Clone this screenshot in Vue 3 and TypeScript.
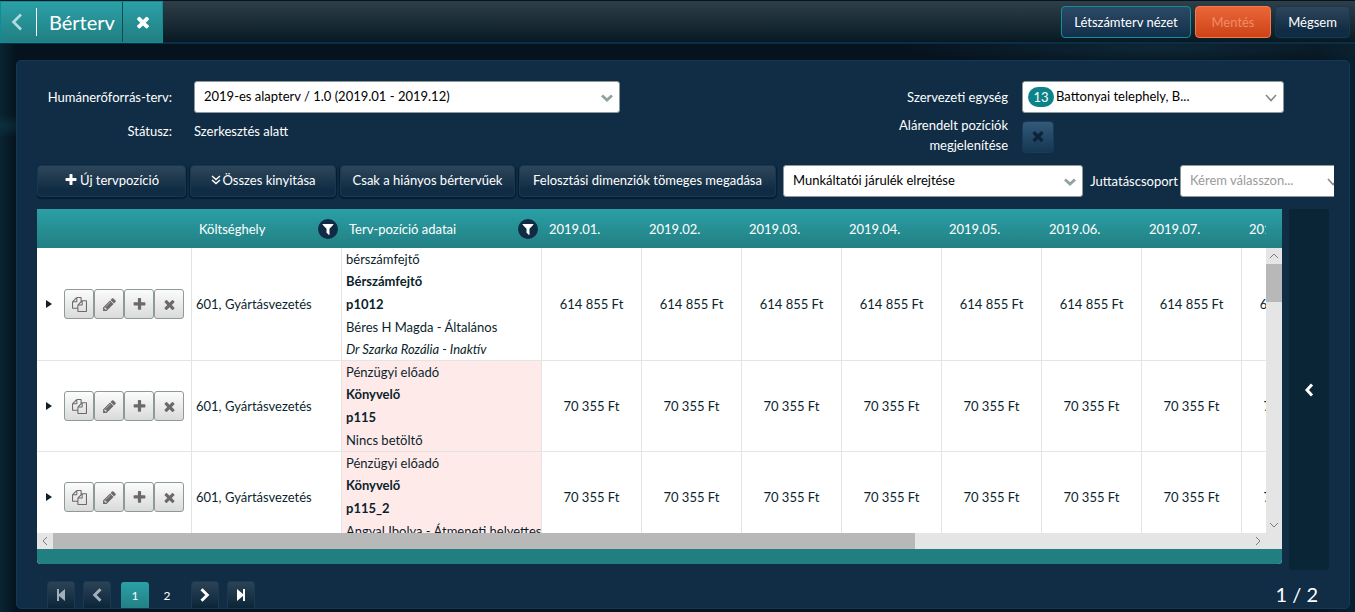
<script setup lang="ts">
import { ref } from 'vue'

interface PlanLine {
  text: string
  kind?: 'bold' | 'italic'
}

interface PlanRow {
  id: number
  costCenter: string
  lines: PlanLine[]
  missing: boolean
  amount: string
}

const months: string[] = Array.from({ length: 8 }, (_, i) => `2019.${String(i + 1).padStart(2, '0')}.`)

const rows: PlanRow[] = [
  {
    id: 1,
    costCenter: '601, Gyártásvezetés',
    lines: [
      { text: 'bérszámfejtő' },
      { text: 'Bérszámfejtő', kind: 'bold' },
      { text: 'p1012', kind: 'bold' },
      { text: 'Béres H Magda - Általános' },
      { text: 'Dr Szarka Rozália - Inaktív', kind: 'italic' },
    ],
    missing: false,
    amount: '614 855 Ft',
  },
  {
    id: 2,
    costCenter: '601, Gyártásvezetés',
    lines: [
      { text: 'Pénzügyi előadó' },
      { text: 'Könyvelő', kind: 'bold' },
      { text: 'p115', kind: 'bold' },
      { text: 'Nincs betöltő' },
    ],
    missing: true,
    amount: '70 355 Ft',
  },
  {
    id: 3,
    costCenter: '601, Gyártásvezetés',
    lines: [
      { text: 'Pénzügyi előadó' },
      { text: 'Könyvelő', kind: 'bold' },
      { text: 'p115_2', kind: 'bold' },
      { text: 'Angyal Ibolya - Átmeneti helyettes' },
    ],
    missing: true,
    amount: '70 355 Ft',
  },
]

const icons = {
  times:
    'M1490 1322q0 40-28 68l-136 136q-28 28-68 28t-68-28l-294-294-294 294q-28 28-68 28t-68-28l-136-136q-28-28-28-68t28-68l294-294-294-294q-28-28-28-68t28-68l136-136q28-28 68-28t68 28l294 294 294-294q28-28 68-28t68 28l136 136q28 28 28 68t-28 68l-294 294 294 294q28 28 28 68z',
  plus: 'M1600 736v192q0 40-28 68t-68 28h-416v416q0 40-28 68t-68 28h-192q-40 0-68-28t-28-68v-416h-416q-40 0-68-28t-28-68v-192q0-40 28-68t68-28h416v-416q0-40 28-68t68-28h192q40 0 68 28t28 68v416h416q40 0 68 28t28 68z',
  pencil:
    'M491 1536l91-91-235-235-91 91v107h128v128h107zm523-928q0-22-22-22-10 0-17 7l-542 542q-7 7-7 17 0 22 22 22 10 0 17-7l542-542q7-7 7-17zm-54-192l416 416-832 832h-416v-416zm683 96q0 53-37 90l-166 166-416-416 166-165q36-38 90-38 53 0 91 38l235 234q37 39 37 91z',
  copy: 'M1696 384q40 0 68 28t28 68v1216q0 40-28 68t-68 28h-960q-40 0-68-28t-28-68v-288h-544q-40 0-68-28t-28-68v-672q0-40 20-88t48-76l408-408q28-28 76-48t88-20h416q40 0 68 28t28 68v328q68-40 128-40h416zm-544 213l-299 299h299v-299zm-640-384l-299 299h299v-299zm196 647l316-316v-416h-384v416q0 40-28 68t-68 28h-416v640h512v-256q0-40 20-88t48-76zm956 804v-1152h-384v416q0 40-28 68t-68 28h-416v640h896z',
  filter:
    'M1595 295q17 41-14 70l-493 493v742q0 42-39 59-13 5-25 5-27 0-45-19l-256-256q-19-19-19-45v-486l-493-493q-31-29-14-70 17-39 59-39h1280q42 0 59 39z',
}

const actions = [
  { label: 'Másolás', path: icons.copy, cls: 'wide' },
  { label: 'Szerkesztés', path: icons.pencil, cls: '' },
  { label: 'Hozzáadás', path: icons.plus, cls: '' },
  { label: 'Törlés', path: icons.times, cls: '' },
]

const page = ref(1)
const showSubordinate = ref(false)
</script>

<template>
  <div class="app">
    <header class="topbar">
      <div class="tab">
        <button class="back" type="button" aria-label="Vissza">
          <svg width="12" height="18" viewBox="0 0 12 18"><path d="M10 1.500 2.500 9 10 16.500" fill="none" stroke="currentColor" stroke-width="2.600" /></svg>
        </button>
        <h1>Bérterv</h1>
        <button class="close" type="button" aria-label="Bezárás">
          <svg width="18" height="18" viewBox="0 0 1792 1792"><path :d="icons.times" fill="currentColor" /></svg>
        </button>
      </div>
      <div class="top-actions">
        <button class="btn outlined" type="button">Létszámterv nézet</button>
        <button class="btn save" type="button" disabled>Mentés</button>
        <button class="btn cancel" type="button">Mégsem</button>
      </div>
    </header>

    <main class="panel">
      <div class="form">
        <div class="form-grid main-fields">
          <label for="plan">Humánerőforrás-terv:</label>
          <div class="select">
            <select id="plan"><option>2019-es alapterv / 1.0 (2019.01 - 2019.12)</option></select>
            <svg class="caret bold" viewBox="0 0 12 8"><path d="M1 1.500 6 6 11 1.500" /></svg>
          </div>
          <span class="key">Státusz:</span>
          <span>Szerkesztés alatt</span>
        </div>
        <div class="form-grid unit-fields">
          <label for="unit">Szervezeti egység</label>
          <div class="select unit">
            <span class="badge">13</span>
            <select id="unit"><option>Battonyai telephely, B...</option></select>
            <svg class="caret" viewBox="0 0 12 8"><path d="M1 1 6 6.500 11 1" /></svg>
          </div>
          <label for="sub">Alárendelt pozíciók megjelenítése</label>
          <div class="toggle">
            <input id="sub" v-model="showSubordinate" type="checkbox" />
            <svg width="16" height="16" viewBox="0 0 1792 1792"><path :d="icons.times" fill="currentColor" /></svg>
          </div>
        </div>
      </div>

      <div class="toolbar">
        <button class="btn new" type="button">
          <svg width="14" height="14" viewBox="0 0 1792 1792"><path :d="icons.plus" fill="currentColor" /></svg>
          Új tervpozíció
        </button>
        <button class="btn expand" type="button">
          <svg width="10" height="10" viewBox="0 0 10 10"><path d="M1 1 5 4.500 9 1M1 5 5 8.500 9 5" fill="none" stroke="currentColor" stroke-width="1.500" /></svg>
          Összes kinyitása
        </button>
        <button class="btn missing" type="button">Csak a hiányos bértervűek</button>
        <button class="btn split" type="button">Felosztási dimenziók tömeges megadása</button>
        <div class="select contrib">
          <select aria-label="Munkáltatói járulék"><option>Munkáltatói járulék elrejtése</option></select>
          <svg class="caret bold" viewBox="0 0 12 8"><path d="M1 1.500 6 6 11 1.500" /></svg>
        </div>
        <label class="group-label" for="group">Juttatáscsoport</label>
        <div class="select group">
          <select id="group"><option>Kérem válasszon...</option></select>
          <svg class="caret" viewBox="0 0 12 8"><path d="M1 1 6 6.500 11 1" /></svg>
        </div>
      </div>

      <div class="content">
        <section class="grid">
          <div class="viewport">
            <table>
              <colgroup>
                <col class="c-actions" />
                <col class="c-cost" />
                <col class="c-plan" />
                <col v-for="m in months" :key="m" class="c-month" />
              </colgroup>
              <thead>
                <tr>
                  <th></th>
                  <th>
                    <div class="head">
                      Költséghely
                      <button class="filter" type="button" aria-label="Költséghely szűrése">
                        <svg width="14" height="14" viewBox="0 0 1792 1792"><path :d="icons.filter" fill="currentColor" /></svg>
                      </button>
                    </div>
                  </th>
                  <th>
                    <div class="head">
                      Terv-pozíció adatai
                      <button class="filter" type="button" aria-label="Terv-pozíció szűrése">
                        <svg width="14" height="14" viewBox="0 0 1792 1792"><path :d="icons.filter" fill="currentColor" /></svg>
                      </button>
                    </div>
                  </th>
                  <th v-for="m in months" :key="m">{{ m }}</th>
                </tr>
              </thead>
              <tbody>
                <tr v-for="row in rows" :key="row.id">
                  <td>
                    <div class="row-actions">
                      <button class="opener" type="button" aria-label="Kinyitás">
                        <svg width="6" height="8" viewBox="0 0 6 8"><path d="M0 0 6 4 0 8z" fill="currentColor" /></svg>
                      </button>
                      <button v-for="a in actions" :key="a.label" class="mini" type="button" :aria-label="a.label">
                        <svg :class="a.cls" viewBox="0 0 1792 1792"><path :d="a.path" fill="currentColor" /></svg>
                      </button>
                    </div>
                  </td>
                  <td class="cost">{{ row.costCenter }}</td>
                  <td class="plan" :class="{ pink: row.missing }">
                    <div v-for="line in row.lines" :key="line.text" class="line" :class="line.kind">{{ line.text }}</div>
                  </td>
                  <td v-for="m in months" :key="m" class="amount">{{ row.amount }}</td>
                </tr>
              </tbody>
            </table>
          </div>
          <div class="corner"></div>
          <div class="vscroll">
            <svg viewBox="0 0 16 16"><path d="M4 10 8 6 12 10" /></svg>
            <div class="vthumb"></div>
            <svg class="end" viewBox="0 0 16 16"><path d="M4 6 8 10 12 6" /></svg>
          </div>
          <div class="hscroll">
            <svg viewBox="0 0 16 16"><path d="M10 4 6 8 10 12" /></svg>
            <div class="htrack"><div class="hthumb"></div></div>
            <svg viewBox="0 0 16 16"><path d="M6 4 10 8 6 12" /></svg>
          </div>
          <div class="grid-foot"></div>
        </section>
        <button class="drawer" type="button" aria-label="Oldalsáv nyitása">
          <svg width="10" height="14" viewBox="0 0 10 14"><path d="M8 1.500 3 7 8 12.500" fill="none" stroke="currentColor" stroke-width="3" /></svg>
        </button>
      </div>

      <footer class="pager">
        <nav aria-label="Lapozó">
          <button class="page-btn" type="button" disabled aria-label="Első">
            <svg width="10" height="12" viewBox="0 0 10 12"><path d="M1 0H3V5L9 0V12L3 7V12H1z" fill="currentColor" /></svg>
          </button>
          <button class="page-btn" type="button" disabled aria-label="Előző">
            <svg width="12" height="14" viewBox="0 0 10 12"><path d="M8 1 3 6 8 11" fill="none" stroke="currentColor" stroke-width="2.500" /></svg>
          </button>
          <div class="page-nums">
            <button class="page-num" :class="{ current: page === 1 }" type="button" @click="page = 1">1</button>
            <button class="page-num" :class="{ current: page === 2 }" type="button" @click="page = 2">2</button>
          </div>
          <button class="page-btn" type="button" aria-label="Következő">
            <svg width="12" height="14" viewBox="0 0 10 12"><path d="M2 1 7 6 2 11" fill="none" stroke="currentColor" stroke-width="2.500" /></svg>
          </button>
          <button class="page-btn" type="button" aria-label="Utolsó">
            <svg width="10" height="12" viewBox="0 0 10 12"><path d="M9 0H7V5L1 0V12L7 7V12H9z" fill="currentColor" /></svg>
          </button>
        </nav>
        <span class="count">{{ page }} / 2</span>
      </footer>
    </main>
  </div>
</template>

<style>
body {
  background: #06131f;
}
</style>

<style scoped>
.app {
  display: flex;
  flex-direction: column;
  box-sizing: border-box;
  height: 100vh;
  min-height: 480px;
  padding-bottom: 3px;
  overflow: hidden;
  color: #fff;
  font: 13px/20px Lato, 'Noto Sans', sans-serif;
  background:
    radial-gradient(ellipse 30px 12px at 0 126px, #0c2f3c, transparent),
    radial-gradient(ellipse 260px 18px at 1160px 48px, #0e2735, transparent),
    linear-gradient(90deg, #0a2433 0, #06131f 16px, #06131f 97%, #08202e);
}
*,
*::before {
  box-sizing: border-box;
}
button,
select,
input {
  margin: 0;
  color: inherit;
  font: inherit;
}
button {
  display: flex;
  align-items: center;
  justify-content: center;
  padding: 0;
  border: 0;
  background: none;
  white-space: nowrap;
}
svg {
  display: block;
  flex: none;
}

.topbar {
  display: flex;
  flex: none;
  justify-content: space-between;
  height: 44px;
  border-top: 1px solid #06131f;
  border-bottom: 2px solid #0d2c45;
  background: linear-gradient(#2f3f4a, #071923);
}
.tab {
  display: flex;
  align-items: center;
  height: 42px;
  border: 1px solid #0b8e96;
  background: linear-gradient(#2aa0a7, #217f82);
}
.back {
  width: 36px;
  height: 28px;
  padding-right: 4px;
  border-right: 1px solid #fff;
  color: #b4dcde;
}
h1 {
  width: 85px;
  margin: 0;
  padding-left: 12px;
  font-size: 20px;
  font-weight: 400;
  line-height: 38px;
}
.close {
  width: 40px;
  height: 40px;
  border-left: 1px solid #0b4c54;
}
.top-actions {
  display: flex;
  gap: 4px;
  padding: 5px 5px 0 0;
}
.btn {
  flex: none;
  gap: 2px;
  height: 32px;
  border: 1px solid #133955;
  border-radius: 4px;
  background: linear-gradient(#2f465a, #0f2c44 80%);
}
.btn.outlined {
  width: 130px;
  border-color: #0e9297;
  background: linear-gradient(#2c4a66, #12304b);
}
.btn.save {
  width: 76px;
  border-color: #f47a4c;
  color: #f08c66;
  background: linear-gradient(#ea6639, #cc4317);
}
.btn.cancel {
  width: 75px;
}

.panel {
  display: flex;
  flex: 1;
  flex-direction: column;
  min-height: 0;
  margin: 16px 5px 0 16px;
  padding: 20px 15px 0 20px;
  border: 1px solid #123a58;
  border-radius: 5px;
  overflow: hidden;
  background: #102d45;
}
.form {
  display: flex;
  flex: none;
  justify-content: space-between;
  height: 84px;
}
.form-grid {
  display: grid;
  align-content: start;
  align-items: center;
  row-gap: 2px;
}
.main-fields {
  grid-template-columns: 135px 426px;
  column-gap: 22px;
}
.main-fields > .key {
  line-height: 32px;
}
.unit-fields {
  grid-template-columns: 130px 262px;
  column-gap: 14px;
  margin-right: 50px;
}
label,
.key {
  text-align: right;
}
.select {
  position: relative;
}
select {
  display: block;
  width: 100%;
  height: 32px;
  padding: 0 32px 2px 9px;
  border: 1px solid #8b9a98;
  border-radius: 3px;
  color: #000;
  background: #fff;
  appearance: none;
}
.caret {
  position: absolute;
  top: 13px;
  right: 7px;
  width: 12px;
  height: 8px;
  fill: none;
  stroke: #888;
  stroke-width: 1.6;
  pointer-events: none;
}
.caret.bold {
  stroke: #91a29f;
  stroke-width: 2.8;
}
.unit select {
  padding-left: 33px;
}
.badge {
  position: absolute;
  top: 6px;
  left: 6px;
  width: 26px;
  height: 20px;
  border-radius: 10px;
  text-align: center;
  background: #0c8388;
}
.toggle {
  position: relative;
  width: 32px;
  height: 32px;
  margin-top: 4px;
}
.toggle input {
  display: block;
  width: 32px;
  height: 32px;
  border: 1px solid #173b59;
  border-radius: 4px;
  background: linear-gradient(#33597a, #153753);
  appearance: none;
}
.toggle svg {
  position: absolute;
  top: 7px;
  left: 8px;
  color: #0d2338;
  pointer-events: none;
}

.toolbar {
  display: flex;
  flex: none;
  align-items: center;
  height: 32px;
  clip-path: inset(-4px 0);
}
.toolbar .btn {
  margin-right: 4px;
  padding-bottom: 2px;
  box-shadow: 0 1px 1px 1px #081c2b;
}
.new {
  width: 149px;
}
.expand {
  width: 146px;
}
.missing {
  width: 175px;
}
.toolbar .split {
  width: 257px;
  margin-right: 7px;
}
.contrib {
  flex: none;
  width: 300px;
}
.group-label {
  flex: none;
  width: 95px;
}
.group {
  flex: none;
  width: 162px;
  margin-left: 2px;
}
.group select {
  color: #9a9a9a;
}
.group .caret {
  right: 3px;
}

.content {
  display: flex;
  flex: 1;
  gap: 7px;
  min-height: 0;
  margin-top: 12px;
  padding-right: 5px;
}
.grid {
  display: grid;
  flex: 1;
  grid-template-columns: minmax(0, 1fr) 16px;
  grid-template-rows: 39px minmax(0, 1fr) 16px 15px;
  min-width: 0;
  margin-bottom: 6px;
  border-radius: 0 0 4px 4px;
  overflow: hidden;
  background: #fff;
}
.viewport {
  grid-row: 1 / 3;
  overflow: hidden;
}
.corner,
thead tr {
  background: linear-gradient(#2aa0a6, #227f82);
}
table {
  width: 1304px;
  border-spacing: 0;
  table-layout: fixed;
  color: #0b1f2c;
}
.c-actions {
  width: 154px;
}
.c-cost {
  width: 150px;
}
.c-plan {
  width: 200px;
}
.c-month {
  width: 100px;
}
th {
  height: 39px;
  padding: 0 3px 0 8px;
  color: #fff;
  font-weight: 400;
  text-align: left;
}
.head {
  display: flex;
  align-items: center;
  justify-content: space-between;
}
.filter {
  width: 20px;
  height: 20px;
  border-radius: 10px;
  background: #0f2c44;
}
td {
  padding: 0 4px;
  border-bottom: 1px solid #e4e4e4;
  border-left: 1px solid #e4e4e4;
  white-space: nowrap;
}
td:first-child {
  border-left: 0;
}
.row-actions {
  display: flex;
  align-items: center;
  padding-left: 5px;
}
.opener {
  width: 6px;
  height: 20px;
  margin-right: 12px;
}
.mini {
  width: 30px;
  height: 30px;
  border: 1px solid #8c9a98;
  border-radius: 3px;
  color: #6a6a6a;
  background: linear-gradient(#fcfcfc, #dadada);
}
.mini svg {
  width: 15px;
  height: 15px;
}
.plan {
  overflow: hidden;
}
.pink {
  background: #ffeaea;
}
.line {
  line-height: 22px;
}
.line.bold {
  line-height: 23px;
  font-weight: 700;
}
.line.italic {
  font-style: italic;
}
.amount {
  text-align: center;
}
.vscroll {
  display: flex;
  flex-direction: column;
  background: #e5e5e5;
}
.vscroll svg,
.hscroll svg {
  width: 16px;
  height: 16px;
  fill: none;
  stroke: #7d7d7d;
}
.vthumb {
  height: 38px;
  background: #b8b8b8;
}
.vscroll .end {
  margin-top: auto;
}
.hscroll {
  display: flex;
  grid-column: 1 / 3;
  padding-right: 16px;
  background: #e5e5e5;
}
.htrack {
  flex: 1;
}
.hthumb {
  width: 72%;
  height: 16px;
  background: #b8b8b8;
}
.grid-foot {
  grid-column: 1 / 3;
  background: #217f82;
}
.drawer {
  flex: none;
  width: 40px;
  border-radius: 3px;
  background: #0a2536;
}

.pager {
  display: flex;
  flex: none;
  justify-content: space-between;
  height: 27px;
  margin-top: 11px;
  padding: 0 16px 0 10px;
  overflow: hidden;
}
nav {
  display: flex;
  gap: 8px;
}
.page-btn,
.page-num {
  width: 28px;
  height: 28px;
  border-radius: 3px 3px 0 0;
}
.page-btn {
  border: 1px solid #1b3950;
  background: linear-gradient(#2c4356, #0b2538);
}
.page-btn:disabled {
  color: #a3afb9;
}
.page-nums {
  display: flex;
  gap: 4px;
  padding: 1px 2px 0;
}
.page-nums + .page-btn {
  margin-left: 0;
}
.page-num {
  font-size: 12px;
}
.page-num.current {
  background: linear-gradient(#2aa0a6, #217f82);
}
.count {
  font-size: 20px;
  line-height: 26px;
}
</style>
